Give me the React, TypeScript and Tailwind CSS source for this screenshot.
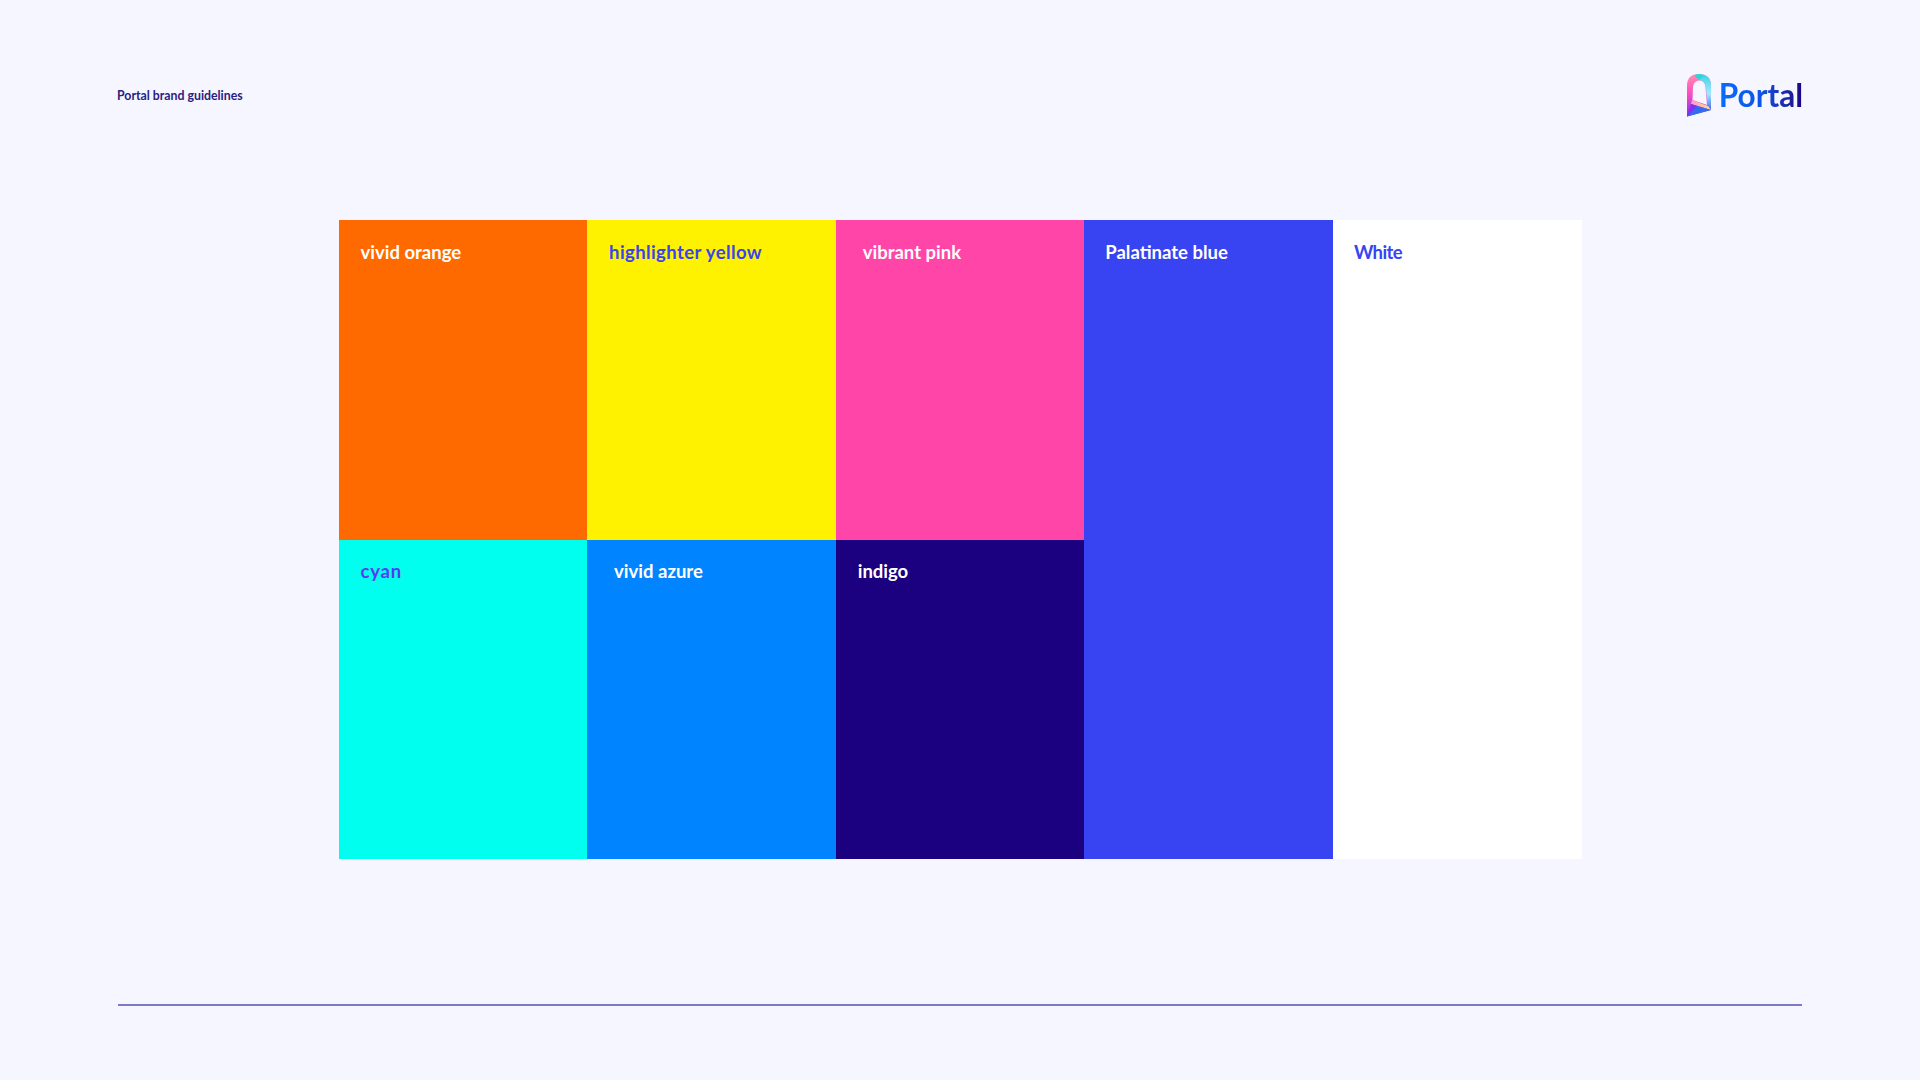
const F = "font-['Lato','Noto_Sans',sans-serif]";

function Swatch({ label, bg, text, pl, pt = "pt-[19px]", track = "", className = "" }: { label: string; bg: string; text: string; pl: string; pt?: string; track?: string; className?: string }) {
  return (
    <div className={`${bg} ${pl} ${pt} ${className}`}>
      <span className={`block ${text} ${track} text-[18.5px] leading-[26px] font-bold`}>{label}</span>
    </div>
  );
}

function Logo() {
  return (
    <div className="flex items-center gap-[7px] -mr-[1px]">
      <svg width="26" height="44" viewBox="0 0 26 44" className="block">
        <defs>
          <linearGradient id="left" x1="0" y1="0" x2="0" y2="1">
            <stop offset="0" stopColor="#ff8fb0" />
            <stop offset="0.45" stopColor="#ff4fc0" />
            <stop offset="1" stopColor="#8a2cf0" />
          </linearGradient>
          <linearGradient id="right" x1="0" y1="0" x2="0" y2="1">
            <stop offset="0" stopColor="#35d8e8" />
            <stop offset="0.55" stopColor="#a8e6ff" />
            <stop offset="1" stopColor="#3d6cf0" />
          </linearGradient>
          <linearGradient id="sill" x1="0" y1="0" x2="1" y2="0">
            <stop offset="0" stopColor="#ff9ad0" />
            <stop offset="1" stopColor="#ffe08a" />
          </linearGradient>
        </defs>
        <path d="M1 43.5 L1 13 Q1 1 13 1 Q25 1 25 13 L25 37 Z" fill="url(#left)" />
        <path d="M10 1.5 Q25 0 25 13 L25 37 L21 32 L20 14 Q19 8 14 7 Z" fill="url(#right)" />
        <path d="M8 2.5 L13 7 L18 2.5 Q13 0 8 2.5 Z" fill="#2fd2d8" />
        <path d="M6 27 L22 33 L25 37 L5 31 Z" fill="url(#sill)" />
        <path d="M1 43.5 L5 31 L25 37 Z" fill="#2f6cf0" />
        <path d="M1 43.5 L5 31 L11 33 Z" fill="#8a2cf0" />
        <path d="M6.5 27 L7 14 Q7.5 8 13.5 7.5 Q19 8 19.5 14 L21 32 Z" fill="#f5f6ff" />
      </svg>
      <span className={`${F} text-[31.5px] leading-[44px] font-bold bg-gradient-to-r from-[#0a6cff] via-[#0a55e8] to-[#1b0080] bg-clip-text text-transparent`}>Portal</span>
    </div>
  );
}

export default function App() {
  return (
    <div className={`${F} w-[1920px] h-[1080px] bg-[#f5f6ff] flex flex-col px-[118px] overflow-hidden`}>
      <header className="h-[220px] flex items-start justify-between pt-[73px]">
        <span className="text-[12.3px] leading-[46px] font-bold text-[#2b2180] -ml-[1px]">Portal brand guidelines</span>
        <Logo />
      </header>
      <div className="w-[1243px] h-[639px] ml-[220.5px] grid grid-cols-5 grid-rows-2">
        <Swatch label="vivid orange" bg="bg-[#ff6a00]" text="text-white" pl="pl-[22px]" />
        <Swatch label="highlighter yellow" bg="bg-[#fff200]" text="text-[#3843f2]" pl="pl-[22px]" track="tracking-[0.4px]" />
        <Swatch label="vibrant pink" bg="bg-[#ff45a8]" text="text-white" pl="pl-[27px]" />
        <Swatch label="Palatinate blue" bg="bg-[#3843f2]" text="text-white" pl="pl-[21px]" className="row-span-2" />
        <Swatch label="White" bg="bg-white" text="text-[#3843f2]" pl="pl-[21px]" track="-tracking-[0.6px]" className="row-span-2" />
        <Swatch label="cyan" bg="bg-[#00ffee]" text="text-[#5a3cf0]" pl="pl-[22px]" pt="pt-[18px]" track="tracking-[0.8px]" />
        <Swatch label="vivid azure" bg="bg-[#0084ff]" text="text-white" pl="pl-[27px]" pt="pt-[18px]" />
        <Swatch label="indigo" bg="bg-[#1b0080]" text="text-white" pl="pl-[22px]" pt="pt-[18px]" />
      </div>
      <div className="mt-[145px] h-[2px] bg-[#7f7ac6]" />
    </div>
  );
}
